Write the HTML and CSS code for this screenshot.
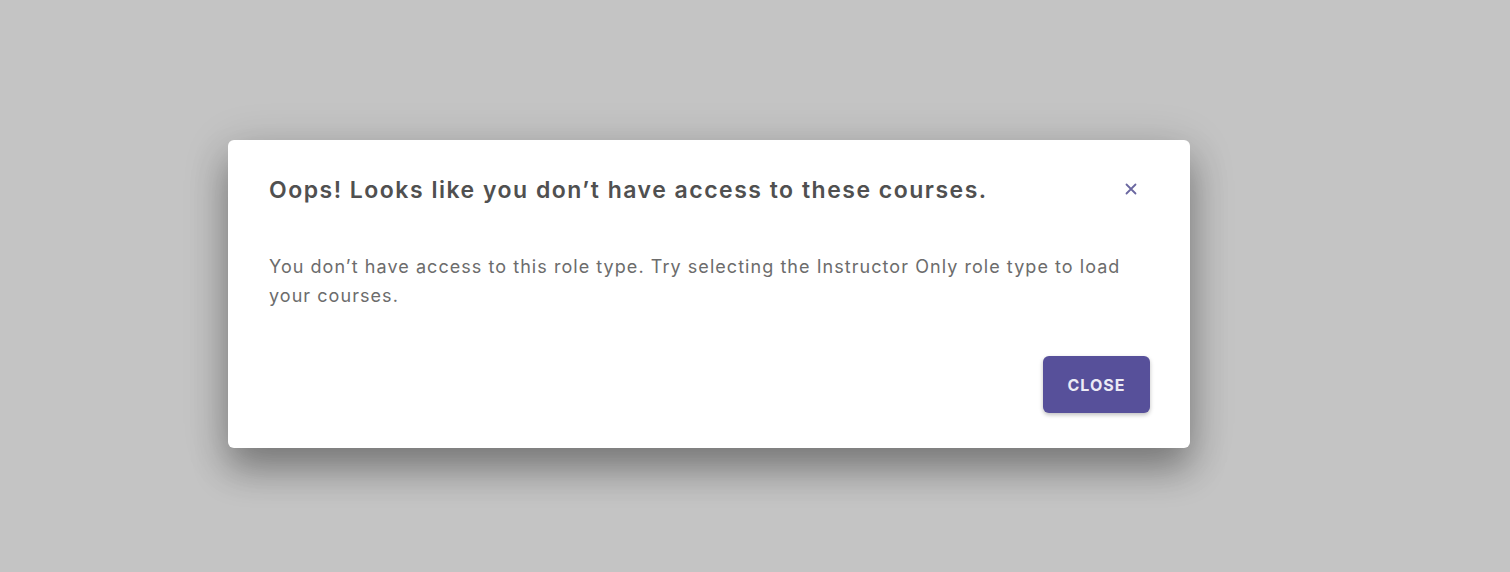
FILE: index.html
```html
<html>
    <head>
        <title>Access denied</title>
        <link rel="stylesheet" href="styles.css">
    </head>
    <body>
        <div class="backdrop">
            <div class="dialog">
                <div class="dialog-head">
                    <h2 class="dialog-title">Oops! Looks like you don’t have access to these courses.</h2>
                    <button class="dialog-x" aria-label="Close">
                        <svg width="14" height="14" viewBox="0 0 14 14">
                            <path d="M2.5 2.5 L11.5 11.5 M11.5 2.5 L2.5 11.5" stroke="currentColor" stroke-width="1.8" stroke-linecap="round" fill="none"/>
                        </svg>
                    </button>
                </div>
                <p class="dialog-body">You don’t have access to this role type. Try selecting the Instructor Only role type to load your courses.</p>
                <div class="dialog-foot">
                    <button class="btn-close">CLOSE</button>
                </div>
            </div>
        </div>
    </body>
</html>
```

FILE: styles.css
```css
body {
    margin: 0;
    background: #c4c4c4;
    font-family: Inter, "Noto Sans", sans-serif;
}

.backdrop {
    height: 572px;
    padding-top: 140px;
    box-sizing: border-box;
}

.dialog {
    margin-left: 228px;
    width: 962px;
    height: 308px;
    box-sizing: border-box;
    background: #fff;
    border-radius: 6px;
    padding: 30px 40px 0 41px;
    box-shadow: 0 22px 36px rgba(0, 0, 0, 0.3), 0 8px 48px rgba(0, 0, 0, 0.16);
}

.dialog-head {
    display: flex;
    justify-content: space-between;
    align-items: flex-start;
}

.dialog-title {
    margin: 0;
    font-size: 23px;
    line-height: 41px;
    font-weight: 600;
    letter-spacing: 1.5px;
    color: #505050;
}

.dialog-x {
    border: none;
    background: none;
    color: #6a67a0;
    padding: 0;
    margin: 12px 12px 0 0;
    width: 14px;
    height: 14px;
}

.dialog-body {
    margin: 41px 0 0 0;
    width: 880px;
    font-size: 18px;
    line-height: 29px;
    letter-spacing: 1.05px;
    color: #6c6c6c;
}

.dialog-foot {
    display: flex;
    justify-content: flex-end;
    margin-top: 46px;
}

.btn-close {
    width: 107px;
    height: 57px;
    border: none;
    border-radius: 6px;
    background: #57509a;
    color: #ecebf5;
    font-family: Inter, "Noto Sans", sans-serif;
    font-size: 16px;
    font-weight: 700;
    letter-spacing: 1px;
    box-shadow: 0 2px 4px rgba(0, 0, 0, 0.25);
}
```
